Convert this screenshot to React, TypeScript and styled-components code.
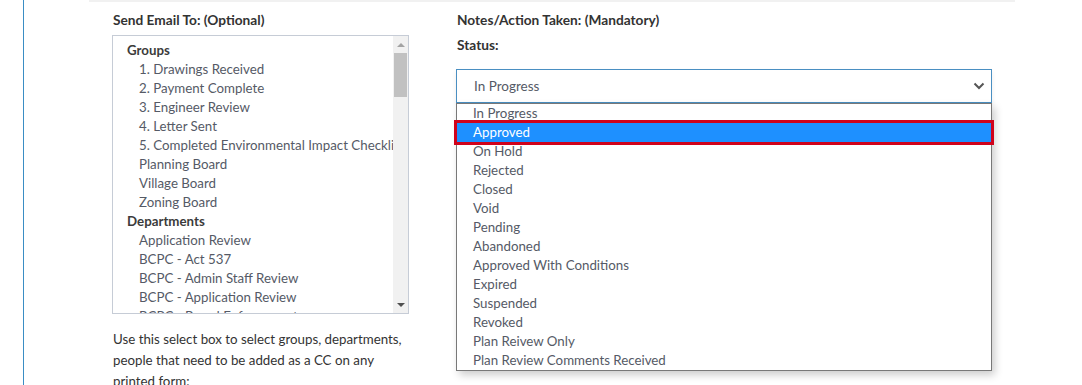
import styled, { createGlobalStyle } from "styled-components";

const GlobalStyle = createGlobalStyle`
  html, body {
    margin: 0;
    padding: 0;
    background: #ffffff;
  }
  body {
    font-family: "Source Sans Pro", Lato, "Liberation Sans", sans-serif;
    color: #333;
  }
`;

const Page = styled.div`
  display: flex;
  height: 385px;
  overflow: hidden;
`;

const Gutter = styled.div`
  width: 23px;
  flex: none;
`;

const Panel = styled.div`
  width: 1016px;
  flex: none;
  border-left: 1px solid #3a8dc4;
  border-right: 1px solid #3a8dc4;
  padding-left: 65px;
`;

const Section = styled.div`
  width: 926px;
  border-top: 2px solid #f1f1f1;
  padding: 8px 0 0 23px;
  box-sizing: border-box;
  display: flex;
  gap: 47px;
`;

const SideGap = styled.div`
  width: 25px;
  flex: none;
`;

const SideRail = styled.div`
  width: 10px;
  flex: none;
  background: #e2e2e2;
  border-right: 1px solid #3a8dc4;
`;

const SideRest = styled.div`
  flex: 1;
  background: #eaf0f5;
`;

const Column = styled.div<{ width: number }>`
  width: ${(p) => p.width}px;
  flex: none;
  display: flex;
  flex-direction: column;
`;

const Label = styled.div<{ $gap: number }>`
  font-size: 13.7px;
  font-weight: 700;
  color: #333;
  line-height: 19px;
  padding-left: 1px;
  margin-bottom: ${(p) => p.$gap}px;
`;

const ListBox = styled.div`
  height: 279px;
  border: 1px solid #c6ccd6;
  display: flex;
  box-sizing: border-box;
`;

const ListContent = styled.div`
  flex: 1;
  overflow: hidden;
  padding: 5px 0 0 14px;
  white-space: nowrap;
`;

const ListRow = styled.div<{ $group?: boolean }>`
  font-size: 13.3px;
  line-height: 19px;
  color: ${(p) => (p.$group ? "#3b3b3b" : "#555a66")};
  font-weight: ${(p) => (p.$group ? 700 : 400)};
  padding-left: ${(p) => (p.$group ? 0 : 12)}px;
`;

const ScrollBar = styled.div`
  width: 15px;
  flex: none;
  background: #f1f1f1;
  display: flex;
  flex-direction: column;
  align-items: center;
`;

const ScrollArrow = styled.div<{ $down?: boolean; $color: string }>`
  height: 17px;
  width: 15px;
  display: flex;
  align-items: center;
  justify-content: center;
  &::before {
    content: "";
    border-left: 4px solid transparent;
    border-right: 4px solid transparent;
    ${(p) =>
      p.$down
        ? `border-top: 4px solid ${p.$color};`
        : `border-bottom: 4px solid ${p.$color};`}
  }
`;

const Thumb = styled.div`
  width: 13px;
  height: 44px;
  background: #c1c1c1;
`;

const Track = styled.div`
  flex: 1;
`;

const HelpText = styled.p`
  margin: 15px 0 0 1px;
  font-size: 13.3px;
  line-height: 21px;
  color: #333;
  width: 296px;
`;

const SelectWrap = styled.div`
  position: relative;
  margin-top: 15px;
`;

const SelectBox = styled.div`
  height: 34px;
  box-sizing: border-box;
  border: 1px solid #4a8fc2;
  display: flex;
  align-items: center;
  justify-content: space-between;
  padding: 0 6px 0 17px;
  font-size: 13.5px;
  color: #555a66;
  box-shadow: 0 3px 5px rgba(0, 0, 0, 0.08);
`;

const Dropdown = styled.div`
  position: absolute;
  top: 34px;
  left: 0;
  width: 536px;
  box-sizing: border-box;
  border: 1px solid #787878;
  background: #fff;
  box-shadow: 3px 4px 8px rgba(0, 0, 0, 0.2);
`;

const Option = styled.div<{ $selected?: boolean }>`
  height: 19px;
  line-height: 19px;
  font-size: 13.3px;
  padding-left: 16px;
  color: ${(p) => (p.$selected ? "#ffffff" : "#555a66")};
  background: ${(p) => (p.$selected ? "#1e90ff" : "transparent")};
  outline: ${(p) => (p.$selected ? "3px solid #d0021b" : "none")};
  position: relative;
`;

const groups = [
  "1. Drawings Received",
  "2. Payment Complete",
  "3. Engineer Review",
  "4. Letter Sent",
  "5. Completed Environmental Impact Checklist",
  "Planning Board",
  "Village Board",
  "Zoning Board",
];

const departments = [
  "Application Review",
  "BCPC - Act 537",
  "BCPC - Admin Staff Review",
  "BCPC - Application Review",
  "BCPC - Board Enforcement",
];

const statuses = [
  "In Progress",
  "Approved",
  "On Hold",
  "Rejected",
  "Closed",
  "Void",
  "Pending",
  "Abandoned",
  "Approved With Conditions",
  "Expired",
  "Suspended",
  "Revoked",
  "Plan Reivew Only",
  "Plan Review Comments Received",
];

const Chevron = () => (
  <svg width="12" height="8" viewBox="0 0 12 8">
    <path d="M1.5 1.5 L6 6 L10.5 1.5" fill="none" stroke="#555" strokeWidth="2" />
  </svg>
);

export default function App() {
  return (
    <Page>
      <GlobalStyle />
      <Gutter />
      <Panel>
        <Section>
          <Column width={297}>
            <Label $gap={6}>Send Email To: (Optional)</Label>
            <ListBox>
              <ListContent>
                <ListRow $group>Groups</ListRow>
                {groups.map((g) => (
                  <ListRow key={g}>{g}</ListRow>
                ))}
                <ListRow $group>Departments</ListRow>
                {departments.map((d) => (
                  <ListRow key={d}>{d}</ListRow>
                ))}
              </ListContent>
              <ScrollBar>
                <ScrollArrow $color="#a3a3a3" />
                <Thumb />
                <Track />
                <ScrollArrow $down $color="#505050" />
              </ScrollBar>
            </ListBox>
            <HelpText>
              Use this select box to select groups, departments, people that
              need to be added as a CC on any printed form:
            </HelpText>
          </Column>
          <Column width={536}>
            <Label $gap={6}>Notes/Action Taken: (Mandatory)</Label>
            <Label $gap={0}>Status:</Label>
            <SelectWrap>
              <SelectBox>
                <span>In Progress</span>
                <Chevron />
              </SelectBox>
              <Dropdown>
                {statuses.map((s) => (
                  <Option key={s} $selected={s === "Approved"}>
                    {s}
                  </Option>
                ))}
              </Dropdown>
            </SelectWrap>
          </Column>
        </Section>
      </Panel>
      <SideGap />
      <SideRail />
      <SideRest />
    </Page>
  );
}
